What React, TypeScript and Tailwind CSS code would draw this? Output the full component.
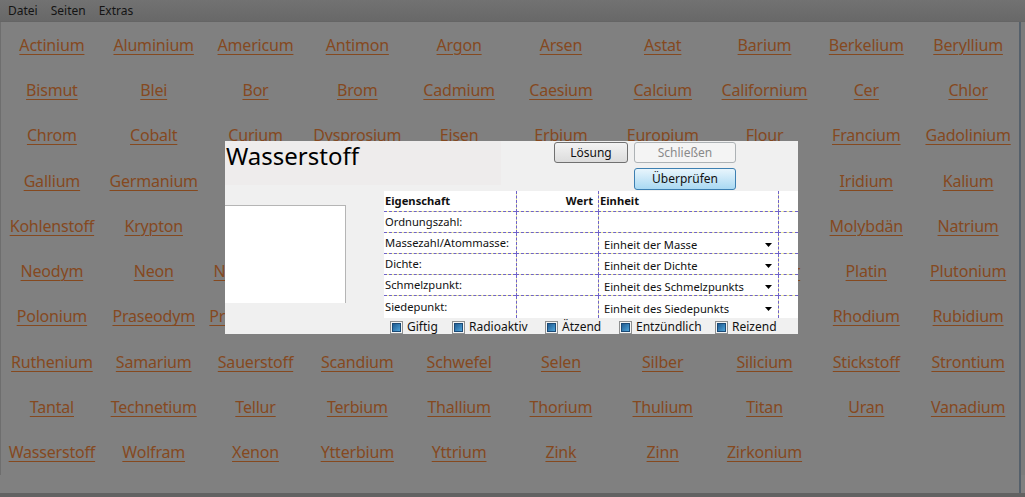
import React from 'react';

const elements: string[] = [
  'Actinium', 'Aluminium', 'Americum', 'Antimon', 'Argon', 'Arsen', 'Astat', 'Barium', 'Berkelium', 'Beryllium',
  'Bismut', 'Blei', 'Bor', 'Brom', 'Cadmium', 'Caesium', 'Calcium', 'Californium', 'Cer', 'Chlor',
  'Chrom', 'Cobalt', 'Curium', 'Dysprosium', 'Eisen', 'Erbium', 'Europium', 'Flour', 'Francium', 'Gadolinium',
  'Gallium', 'Germanium', 'Gold', 'Hafnium', 'Helium', 'Holmium', 'Indium', 'Iod', 'Iridium', 'Kalium',
  'Kohlenstoff', 'Krypton', 'Kupfer', 'Lanthan', 'Lithium', 'Lutetium', 'Magnesium', 'Mangan', 'Molybdän', 'Natrium',
  'Neodym', 'Neon', 'Neptunium', 'Nickel', 'Niob', 'Osmium', 'Palladium', 'Phosphor', 'Platin', 'Plutonium',
  'Polonium', 'Praseodym', 'Promethium', 'Protactinium', 'Quecksilber', 'Radium', 'Radon', 'Rhenium', 'Rhodium', 'Rubidium',
  'Ruthenium', 'Samarium', 'Sauerstoff', 'Scandium', 'Schwefel', 'Selen', 'Silber', 'Silicium', 'Stickstoff', 'Strontium',
  'Tantal', 'Technetium', 'Tellur', 'Terbium', 'Thallium', 'Thorium', 'Thulium', 'Titan', 'Uran', 'Vanadium',
  'Wasserstoff', 'Wolfram', 'Xenon', 'Ytterbium', 'Yttrium', 'Zink', 'Zinn', 'Zirkonium',
];

const rows = [
  { label: 'Ordnungszahl:', unit: '' },
  { label: 'Massezahl/Atommasse:', unit: 'Einheit der Masse' },
  { label: 'Dichte:', unit: 'Einheit der Dichte' },
  { label: 'Schmelzpunkt:', unit: 'Einheit des Schmelzpunkts' },
  { label: 'Siedepunkt:', unit: 'Einheit des Siedepunkts' },
];

const flags = [
  { label: 'Giftig', w: 'w-[62px]' },
  { label: 'Radioaktiv', w: 'w-[93px]' },
  { label: 'Ätzend', w: 'w-[74px]' },
  { label: 'Entzündlich', w: 'w-[96px]' },
  { label: 'Reizend', w: 'w-[70px]' },
];

// grid line: dashed blue over a yellow underlay (cells clip their white to the padding box)
const line = 'border-dashed border-[#6f62c8] bg-white bg-clip-padding';

const Check: React.FC<{ label: string; w: string }> = ({ label, w }) => (
  <div className={`flex items-center gap-[4px] ${w}`}>
    <span className="w-[13px] h-[13px] border border-[#8e8f8f] bg-[#f4f4f4] flex items-center justify-center shrink-0">
      <span className="w-[9px] h-[9px] bg-gradient-to-br from-[#1f5c92] to-[#4fa3d8] border border-[#1b4a75]" />
    </span>
    <span>{label}</span>
  </div>
);

export default function App() {
  return (
    <div className="relative w-[1025px] h-[497px] overflow-hidden bg-[#808080] font-['Noto_Sans',sans-serif]">
      {/* Menu */}
      <div className="h-[22px] flex items-center gap-[13px] pl-[8px] bg-gradient-to-b from-[#727272] to-[#686868] text-[12px] text-[#141414] border-b border-[#656565]">
        <span>Datei</span>
        <span>Seiten</span>
        <span>Extras</span>
      </div>

      {/* Element links */}
      <div className="flex">
        <div className="w-[1px] bg-[#6e6e6e]" />
        <div className="w-[1018px] grid grid-cols-10 grid-rows-10 h-[453px]">
          {elements.map((el) => (
            <div key={el} className="flex items-center justify-center">
              <span className="text-[16px] text-[#85491f] underline underline-offset-[3px] decoration-1 tracking-[-0.2px] whitespace-nowrap">
                {el}
              </span>
            </div>
          ))}
        </div>
        <div className="w-[2px] bg-[#55606b]" />
        <div className="w-[4px] bg-[#7c7c7c]" />
      </div>
      <div className="h-[18px] flex">
        <div className="w-[1019px]" />
        <div className="w-[2px] bg-[#55606b]" />
      </div>
      <div className="h-[4px] bg-[#626262]" />

      {/* Dialog */}
      <div className="absolute left-[225px] top-[141px] w-[573px] h-[193px] bg-[#f0f0f0] flex flex-col text-[11.2px] text-[#111]">
        <div className="flex h-[50px]">
          <div className="w-[329px] flex flex-col">
            <div className="w-[276px] h-[44px] pl-[1px] text-[24px] leading-[30px] text-black bg-[#eeecec]">Wasserstoff</div>
          </div>
          <div className="flex flex-col gap-[5px] pt-[1px] text-[12px]">
            <div className="flex gap-[6px]">
              <button className="w-[74px] h-[21px] rounded-[3px] border border-[#707070] bg-gradient-to-b from-[#f3f3f3] to-[#dcdcdc] leading-none">Lösung</button>
              <button className="w-[102px] h-[21px] rounded-[3px] border border-[#adb2b5] bg-[#f4f4f4] text-[#8a8a8a] leading-none">Schließen</button>
            </div>
            <div className="flex justify-end">
              <button className="w-[102px] h-[22px] rounded-[3px] border border-[#3c7fb1] bg-gradient-to-b from-[#e8f5fc] to-[#a9d9f2] leading-none">Überprüfen</button>
            </div>
          </div>
        </div>

        <div className="flex flex-1">
          <div className="w-[121px] pt-[14px]">
            <div className="h-[98px] bg-white border-t border-r border-[#b5b5b5]" />
          </div>
          <div className="w-[38px]" />
          <div className="flex-1 flex flex-col">
            <div className="bg-[#f2f29c] grid grid-cols-[132px_82px_180px_1fr]">
              <div className={`h-[21px] flex items-center pl-[1px] font-bold border-b ${line}`}>Eigenschaft</div>
              <div className={`h-[21px] flex items-center justify-end pr-[5px] font-bold border-b border-l ${line}`}>Wert</div>
              <div className={`h-[21px] flex items-center pl-[1px] font-bold border-b border-l ${line}`}>Einheit</div>
              <div className={`h-[21px] border-b border-l ${line}`} />
              {rows.map((r, i) => {
                const last = i === rows.length - 1;
                const b = last ? 'h-[22px]' : 'h-[21px] border-b';
                return (
                  <React.Fragment key={r.label}>
                    <div className={`flex items-center pl-[1px] whitespace-nowrap ${line} ${b}`}>{r.label}</div>
                    <div className={`border-l ${line} ${b}`} />
                    <div className={`flex items-center justify-between pl-[5px] pr-[6px] border-l ${line} ${b}`}>
                      {r.unit && (
                        <>
                          <span className="whitespace-nowrap pt-[4px]">{r.unit}</span>
                          <svg width="7" height="4" viewBox="0 0 7 4" className="mt-[3px]">
                            <path d="M0 0h7L3.5 4z" fill="#000" />
                          </svg>
                        </>
                      )}
                    </div>
                    <div className={`border-l ${line} ${b}`} />
                  </React.Fragment>
                );
              })}
            </div>
            <div className="flex items-center h-[16px] pl-[6px] pt-[2px] text-[12px]">
              {flags.map((f) => (
                <Check key={f.label} label={f.label} w={f.w} />
              ))}
            </div>
          </div>
        </div>
      </div>
    </div>
  );
}
